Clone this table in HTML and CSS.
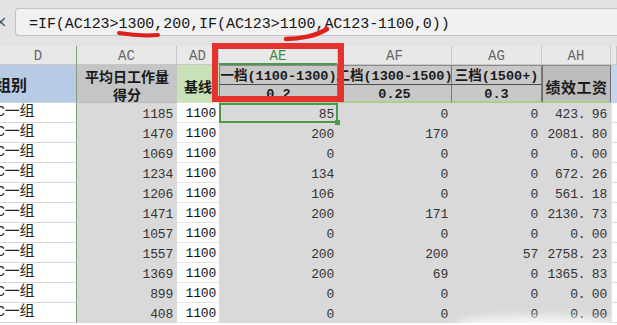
FILE: index.html
```html
<!DOCTYPE html>
<html lang="zh-CN">
<head>
<meta charset="utf-8">
<title>绩效工资</title>
<link rel="stylesheet" href="styles.css">
</head>
<body>
<div class="fbar">
  <div class="fx">×</div>
  <div class="finput">=IF(AC123&gt;1300,200,IF(AC123&gt;1100,AC123-1100,0))</div>
</div>
<div class="sheet">
  <div class="colh frz">D</div>
  <div class="colh">AC</div>
  <div class="colh">AD</div>
  <div class="colh colsel">AE</div>
  <div class="colh">AF</div>
  <div class="colh">AG</div>
  <div class="colh">AH</div>
  <div class="colh"></div>

  <div class="h h-blue span2 frz"><span class="cut">组别</span></div>
  <div class="h h-gray span2 h-ac">平均日工作量<br>得分</div>
  <div class="h h-green span2 h-ad">基线</div>
  <div class="h tier t1 tsel">一档(1100-1300)</div>
  <div class="h tier t1">二档(1300-1500)</div>
  <div class="h tier t1">三档(1500+)</div>
  <div class="h h-ah span2">绩效工资</div>
  <div class="h h-edge span2"></div>
  <div class="h tier t2 tsel">0.2</div>
  <div class="h tier t2">0.25</div>
  <div class="h tier t2">0.3</div>

  <div class="c grp frz">C一组</div><div class="c g">1185</div><div class="c w">1100</div><div class="c g sel">85</div><div class="c g">0</div><div class="c g">0</div><div class="c g">423<span class="pt">.</span>96</div><div class="c e"></div>
  <div class="c grp frz">C一组</div><div class="c g">1470</div><div class="c w">1100</div><div class="c g">200</div><div class="c g">170</div><div class="c g">0</div><div class="c g">2081<span class="pt">.</span>80</div><div class="c e"></div>
  <div class="c grp frz">C一组</div><div class="c g">1069</div><div class="c w">1100</div><div class="c g">0</div><div class="c g">0</div><div class="c g">0</div><div class="c g">0<span class="pt">.</span>00</div><div class="c e"></div>
  <div class="c grp frz">C一组</div><div class="c g">1234</div><div class="c w">1100</div><div class="c g">134</div><div class="c g">0</div><div class="c g">0</div><div class="c g">672<span class="pt">.</span>26</div><div class="c e"></div>
  <div class="c grp frz">C一组</div><div class="c g">1206</div><div class="c w">1100</div><div class="c g">106</div><div class="c g">0</div><div class="c g">0</div><div class="c g">561<span class="pt">.</span>18</div><div class="c e"></div>
  <div class="c grp frz">C一组</div><div class="c g">1471</div><div class="c w">1100</div><div class="c g">200</div><div class="c g">171</div><div class="c g">0</div><div class="c g">2130<span class="pt">.</span>73</div><div class="c e"></div>
  <div class="c grp frz">C一组</div><div class="c g">1057</div><div class="c w">1100</div><div class="c g">0</div><div class="c g">0</div><div class="c g">0</div><div class="c g">0<span class="pt">.</span>00</div><div class="c e"></div>
  <div class="c grp frz">C一组</div><div class="c g">1557</div><div class="c w">1100</div><div class="c g">200</div><div class="c g">200</div><div class="c g">57</div><div class="c g">2758<span class="pt">.</span>23</div><div class="c e"></div>
  <div class="c grp frz">C一组</div><div class="c g">1369</div><div class="c w">1100</div><div class="c g">200</div><div class="c g">69</div><div class="c g">0</div><div class="c g">1365<span class="pt">.</span>83</div><div class="c e"></div>
  <div class="c grp frz">C一组</div><div class="c g">899</div><div class="c w">1100</div><div class="c g">0</div><div class="c g">0</div><div class="c g">0</div><div class="c g">0<span class="pt">.</span>00</div><div class="c e"></div>
  <div class="c grp frz">C一组</div><div class="c g">408</div><div class="c w">1100</div><div class="c g">0</div><div class="c g">0</div><div class="c g">0</div><div class="c g">0<span class="pt">.</span>00</div><div class="c e"></div>
</div>

<div class="redbox"></div>
<svg class="marks" width="617" height="325" viewBox="0 0 617 325">
  <path d="M119 33 C131 35 146 36 158 35" fill="none" stroke="#e0201c" stroke-width="4" stroke-linecap="round"/>
  <path d="M286 39 C299 39 316 36 327 29" fill="none" stroke="#e0201c" stroke-width="4.5" stroke-linecap="round"/>
</svg>
<div class="smudge"></div>
</body>
</html>
```

FILE: styles.css
```css
* { box-sizing: border-box; margin: 0; padding: 0; }
html, body { width: 617px; height: 325px; overflow: hidden; }
body {
  position: relative;
  background: #ffffff;
  font-family: "Liberation Mono", "Noto Sans CJK SC", monospace;
  color: #111;
}

/* formula bar */
.fbar {
  height: 46px;
  background: #e3e3e3;
  display: flex;
  align-items: flex-start;
  padding-top: 8px;
}
.fx {
  width: 15px;
  font-size: 16px;
  line-height: 28px;
  color: #555;
  text-indent: -6px;
  overflow: hidden;
  font-family: "DejaVu Sans", sans-serif;
}
.finput {
  flex: 1;
  height: 28px;
  background: #f1f1f1;
  border: 1px solid #c3c3c3;
  border-right: none;
  border-radius: 4px 0 0 4px;
  padding-left: 13px;
  font-size: 15px;
  line-height: 31px;
  letter-spacing: -0.05px;
  color: #151515;
  white-space: nowrap;
  overflow: hidden;
}

/* sheet grid */
.sheet {
  display: grid;
  grid-template-columns: 77px 100px 42px 119px 114px 90px 69px 6px;
  grid-template-rows: 19px 20px 18px;
  grid-auto-rows: 20px;
}
.colh {
  background: #e8e8e8;
  border-right: 1px solid #c8c8c8;
  border-bottom: 1px solid #c8c8c8;
  color: #666;
  font-size: 14px;
  line-height: 20px;
  text-align: center;
  font-family: "Liberation Mono", monospace;
}
.colsel { color: #3c8c3c; border-bottom: 2px solid #4a9a4a; }
.frz { border-right: 1px solid #7f9c7f; }

.h {
  font-family: "Noto Sans CJK SC", sans-serif;
  font-weight: 700;
  color: #1a1a1a;
  white-space: nowrap;
  display: flex;
  align-items: center;
  justify-content: center;
}
.span2 { grid-row: span 2; }
.h-blue {
  background: #b7cbe5;
  justify-content: flex-start;
  font-size: 16px;
  overflow: hidden;
  border-bottom: 1px solid #c9d3df;
}
.cut { margin-left: -5px; padding-top: 1px; }
.h-gray {
  background: #c5c5c5;
  font-size: 14px;
  line-height: 18px;
  text-align: center;
  padding-top: 2px;
  border-bottom: 1px solid #bdbdbd;
}
.h-green {
  background: #c9e1b8;
  font-size: 14px;
  padding-top: 5px;
  border-bottom: 1px solid #d8e6cf;
}
.tier {
  background: #c8c8c8;
  font-family: "Liberation Mono", "Noto Sans CJK SC", monospace;
  font-size: 13.5px;
  border-right: 1px solid #7a7a7a;
}
.t1 {
  border-bottom: 1px solid #4a4a4a;
  border-top: 1px solid #8a8a8a;
  align-items: flex-end;
  padding-bottom: 1px;
  line-height: 13px;
}
.t2 {
  border-bottom: 2px solid #a9cf8f;
  align-items: flex-end;
  padding-bottom: 0;
  line-height: 12px;
}
.tsel { border-left: 1px solid #4f9a4f; border-right: 1px solid #4f9a4f; }
.h-ah {
  background: #bdbdbd;
  font-size: 15px;
  padding-top: 6px;
  border-left: 1px solid #6f6f6f;
  border-right: 1px solid #6f6f6f;
  border-top: 1px solid #8a8a8a;
  border-bottom: 2px solid #a9cf8f;
  letter-spacing: 0.5px;
}
.h-edge { background: #c3d6ee; }

/* data cells */
.c {
  display: flex;
  align-items: flex-end;
  justify-content: flex-end;
  padding-right: 4px;
  font-size: 13px;
  line-height: 17px;
  letter-spacing: -0.2px;
  white-space: nowrap;
}
.g { background: #d9d9d9; color: #333; }
.w { background: #ffffff; color: #111; border-bottom: 1px solid #e6e6e6; padding-right: 3px; }
.grp {
  background: #fff;
  justify-content: flex-start;
  padding-right: 0;
  font-size: 15px;
  line-height: 18px;
  overflow: hidden;
  border-bottom: 1px solid #d6d6d6;
  text-indent: -4px;
  color: #222;
  font-family: "Liberation Mono", "Noto Sans CJK SC", monospace;
}
.e { background: #fff; border-bottom: 1px solid #d9d9d9; border-left: 1px solid #e4e4e4; }
.pt { display: inline-block; width: 14px; text-align: left; }

.sel {
  position: relative;
  box-shadow: inset 0 0 0 2px #4a9a4a;
  padding-right: 4px;
}
.sel::after {
  content: "";
  position: absolute;
  right: -2px;
  bottom: -2px;
  width: 5px;
  height: 5px;
  background: #4a9a4a;
}

/* annotations overlaid on the screenshot */
.redbox {
  position: absolute;
  left: 212px;
  top: 43px;
  width: 132px;
  height: 59px;
  border: 6px solid #e4322e;
}
.marks { position: absolute; left: 0; top: 0; pointer-events: none; }
.smudge {
  position: absolute;
  left: 455px;
  top: 316px;
  width: 160px;
  height: 16px;
  border-radius: 50%;
  background: rgba(255, 255, 255, 0.75);
  filter: blur(4px);
}
```
